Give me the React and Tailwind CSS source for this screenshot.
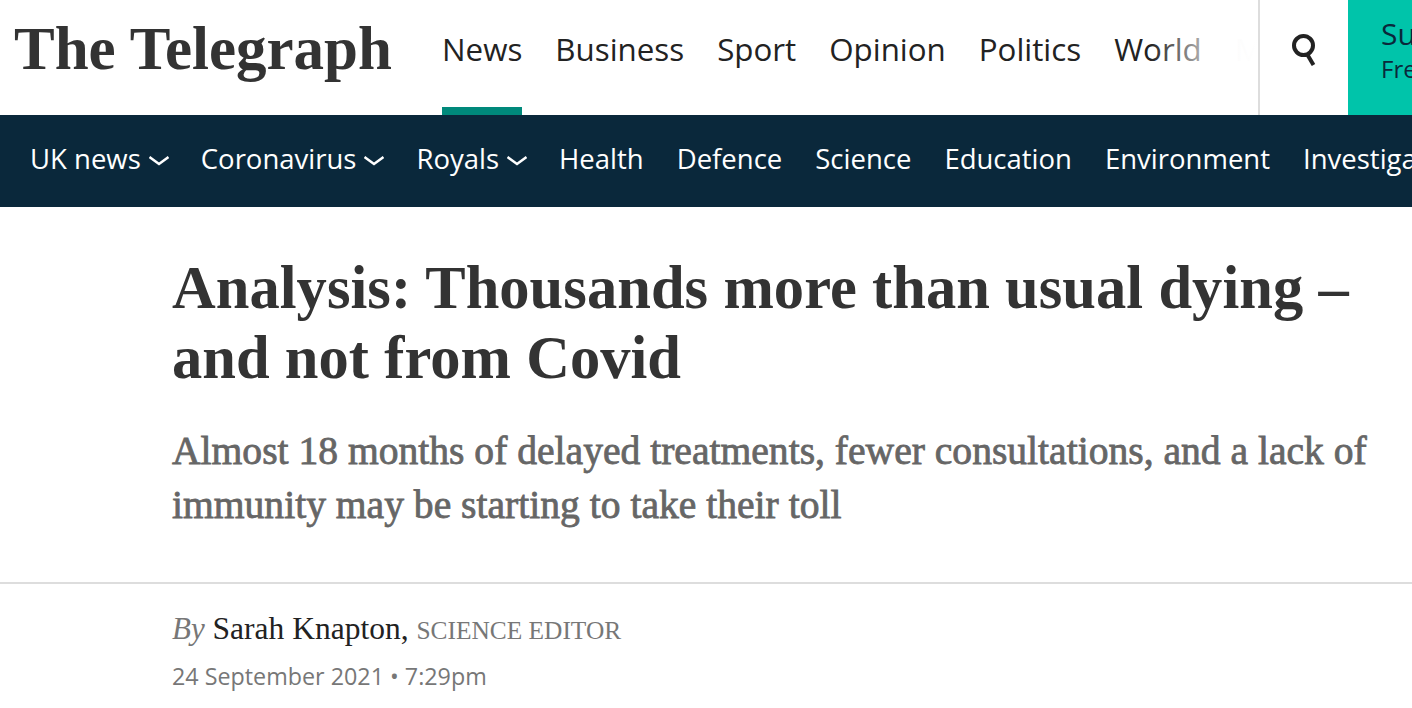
const sans = "font-['Open_Sans','Noto_Sans',sans-serif]"
const serif = "font-['Liberation_Serif',serif]"

const topLinks = ["Business", "Sport", "Opinion", "Politics", "World", "Money"]
const subLinks = [
	{ label: "UK news", menu: true },
	{ label: "Coronavirus", menu: true },
	{ label: "Royals", menu: true },
	{ label: "Health" },
	{ label: "Defence" },
	{ label: "Science" },
	{ label: "Education" },
	{ label: "Environment" },
	{ label: "Investigations" },
]

function TopBar() {
	return (
		<header className="flex h-[115px] overflow-hidden bg-white">
			<div className="w-[442px] shrink-0 pl-[14px] pt-[14px]">
				<span className={`${serif} text-[61px] font-bold leading-[70px] whitespace-nowrap text-[#333]`}>
					The Telegraph
				</span>
			</div>
			<nav className={`${sans} relative flex w-[816px] shrink-0 gap-[33px] overflow-hidden text-[31.3px] text-[#222]`}>
				<a className="flex h-[115px] items-start border-b-8 border-[#00897b] pt-[27px] leading-[44px]">News</a>
				{topLinks.map((link) => (
					<a key={link} className="pt-[27px] leading-[44px]">
						{link}
					</a>
				))}
				<div className="absolute left-[708px] top-0 h-full w-[108px] bg-gradient-to-r from-white/0 via-white/[0.985] via-[75%] to-white" />
			</nav>
			<div className="flex w-[90px] shrink-0 items-center justify-center border-l-2 border-[#ddd] pb-[15px]">
				<svg width="24" height="32" viewBox="0 0 24 32" fill="none" stroke="#222" strokeWidth="4">
					<circle cx="11.5" cy="11.5" r="9.5" />
					<path d="M15 20 L21.5 31" />
				</svg>
			</div>
			<div className={`${sans} flex-1 overflow-hidden bg-[#00c4aa] pl-[33px] pt-[14px] text-[#0a283b] whitespace-nowrap`}>
				<div className="text-[30px] leading-[40px]">Subscribe</div>
				<div className="text-[24px] leading-[30px]">Free</div>
			</div>
		</header>
	)
}

function SubBar() {
	return (
		<nav className={`${sans} flex h-[92px] items-center gap-[32px] overflow-hidden whitespace-nowrap bg-[#0a283b] pb-[4px] pl-[30px] text-[27.5px] text-white`}>
			{subLinks.map((link) => (
				<a key={link.label} className={link.menu ? "flex shrink-0 items-center gap-[8px]" : "flex shrink-0 items-center mr-[1px]"}>
					{link.label}
					{link.menu && (
						<svg width="20" height="12" viewBox="0 0 20 12" fill="none" stroke="white" strokeWidth="2.5" className="mt-[4px]">
							<path d="M0.5 2 L10 9 L19.5 2" />
						</svg>
					)}
				</a>
			))}
		</nav>
	)
}

export default function App() {
	return (
		<div className="h-[708px] w-[1412px] overflow-hidden bg-white">
			<TopBar />
			<SubBar />
			<main className="pl-[172px] pr-[30px] pt-[46px]">
				<h1 className={`${serif} text-[60.5px] font-bold leading-[70px] tracking-[0.05px] text-[#333]`}>
					Analysis: Thousands more than usual dying – and not from Covid
				</h1>
				<p className={`${serif} mt-[31px] text-[39.6px] leading-[54px] text-[#666] [-webkit-text-stroke:0.8px_#666]`}>
					Almost 18 months of delayed treatments, fewer consultations, and a lack of immunity may be starting to take their toll
				</p>
			</main>
			<div className="mt-[50px] border-t-2 border-[#ddd] pl-[172px] pt-[25px]">
				<div className={`${serif} text-[31.5px] leading-[40px] text-[#222]`}>
					<i className="text-[31px] text-[#777]">By</i> Sarah Knapton, <span className="text-[25.4px] text-[#777]">SCIENCE EDITOR</span>
				</div>
				<div className={`${sans} mt-[10px] text-[23.3px] leading-[32px] text-[#777]`}>24 September 2021 • 7:29pm</div>
			</div>
		</div>
	)
}
